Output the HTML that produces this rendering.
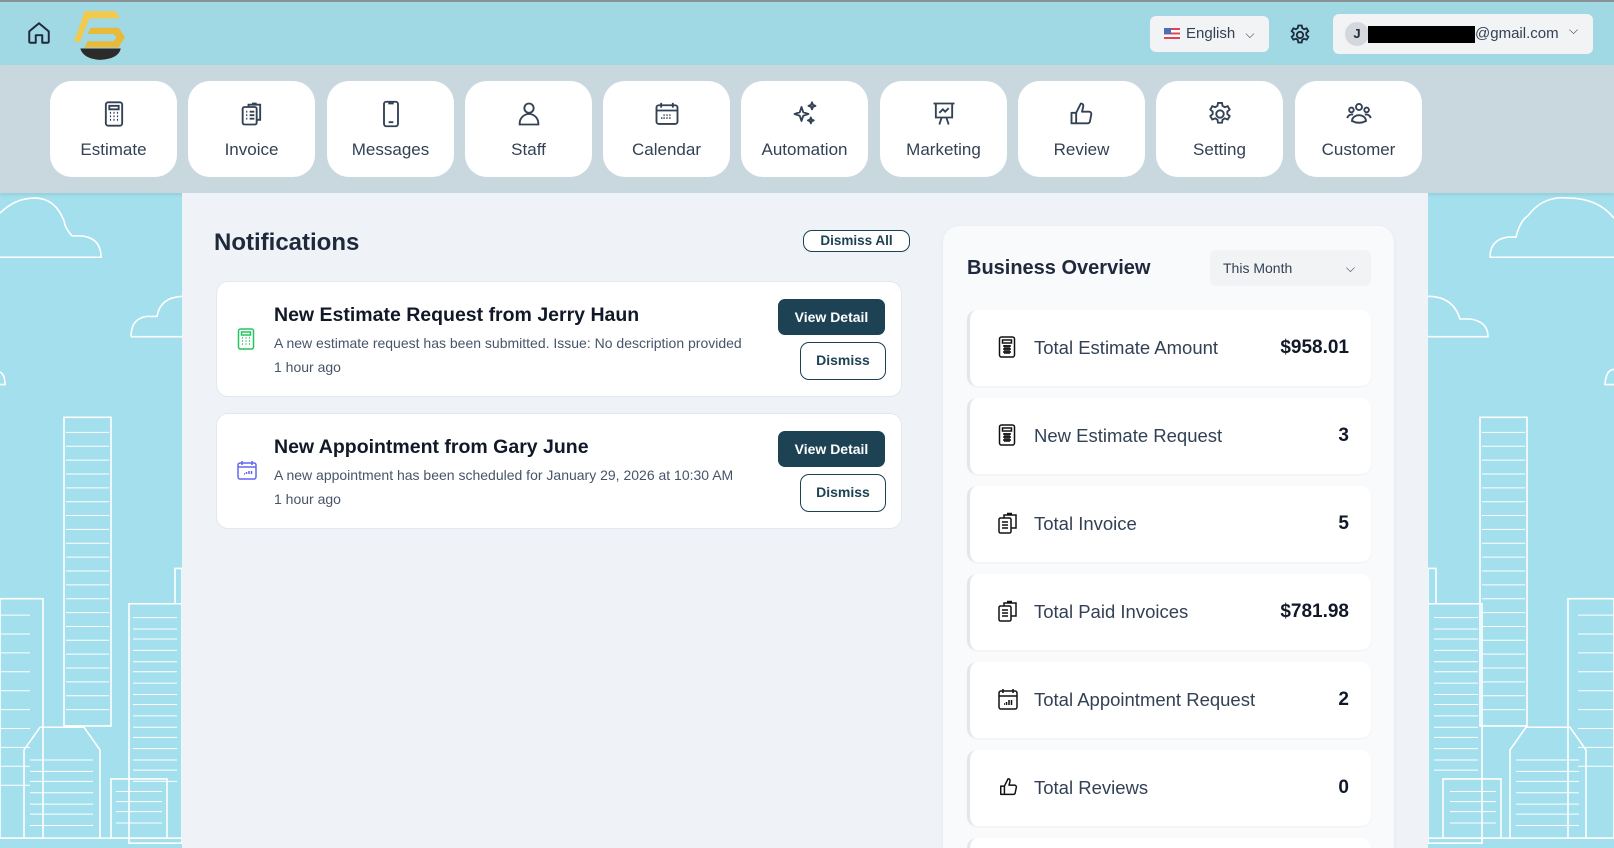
<!DOCTYPE html>
<html><head><meta charset="utf-8"><style>
*{box-sizing:border-box;margin:0;padding:0}
html{width:1614px;height:848px;overflow:hidden}
body{width:1614px;height:848px;overflow:hidden;font-family:"Liberation Sans",sans-serif;color:#1e293b;background:#a3dfec;position:relative}
.hdr{position:absolute;left:0;top:0;width:1614px;height:65px;background:#a0d8e3;border-top:2px solid #8a9296}
.nav{position:absolute;left:0;top:65px;width:1614px;height:128px;background:#c9d8df;box-shadow:0 2px 3px rgba(0,0,0,.08)}
.card{position:absolute;top:16px;width:127px;height:96px;background:#fff;border-radius:22px;text-align:center}
.card svg{position:absolute;left:50%;top:19px;margin-left:-14px}
.card span{position:absolute;left:0;right:0;top:59px;font-size:17px;color:#334155}
.main{position:absolute;left:182px;top:193px;width:1246px;height:655px;background:#eff3f7}
.ttl{position:absolute;font-weight:bold;color:#1e293b}
.btn-o{position:absolute;border:1.5px solid #1c4254;border-radius:9px;color:#1c4254;font-weight:bold;text-align:center;background:#fff}
.btn-d{position:absolute;background:#1c4254;color:#fff;border-radius:7px;font-weight:bold;text-align:center;font-size:14px}
.nc{position:absolute;left:216px;width:686px;height:116px;background:#fff;border-radius:12px;border:1px solid #e3e8ee}
.nc h3{position:absolute;left:57px;top:22px;font-size:19.5px;font-weight:bold;color:#111827}
.nc p{position:absolute;left:57px;font-size:14px;color:#475569}
.ov{position:absolute;left:943px;top:226px;width:451px;height:622px;background:#f8fafc;border-radius:16px 16px 0 0;box-shadow:0 1px 4px rgba(0,0,0,.05)}
.sc{position:absolute;left:967px;width:404px;height:76px;background:#fff;border-radius:10px;border-left:3px solid #e2e5e9;box-shadow:0 1px 2px rgba(0,0,0,.04)}
.sc svg{position:absolute;left:28px;top:26px}
.sc .l{position:absolute;left:64px;top:27px;font-size:18.5px;color:#334155}
.sc .v{position:absolute;right:22px;top:27px;font-size:19px;font-weight:bold;color:#111827}
.sk *{vector-effect:non-scaling-stroke}
</style></head><body>
<svg class="sk" style="position:absolute;left:0;top:193px" width="182" height="655" viewBox="0 0 182 655" fill="none" stroke="#fff" stroke-width="1.6"><g transform="scale(1,1.26)">
<path d="M0 51 H101 Q101 35 80 34 H72 Q65 28 64 22 Q55 4 35 4 Q15 4 0 16"/>
<path d="M131 114 Q131 100 146 98 H157 Q160 83 182 82"/><path d="M131 114 H182"/>
<path d="M0 152 H5 Q5 144 0 142"/>
<rect x="64" y="178" width="47" height="245"/>
<g stroke-width="1"><path d="M66 190H109M66 201H109M66 212H109M66 223H109M66 234H109M66 245H109M66 256H109M66 267H109M66 278H109M66 289H109M66 300H109M66 311H109M66 322H109M66 333H109M66 344H109M66 355H109M66 366H109M66 377H109M66 388H109M66 399H109M66 410H109"/></g>
<rect x="0" y="322" width="43" height="190"/><rect x="129" y="326" width="53" height="190"/><rect x="175" y="298" width="7" height="28"/>
<g stroke-width="1"><path d="M133 337H177M133 346H177M133 354H177M133 363H177M133 372H177M133 380H177M133 389H177M133 398H177M133 406H177M133 415H177M133 424H177M133 432H177M133 441H177M133 450H177M133 458H177M133 467H177M0 335H30M0 350H30M0 365H30M0 380H30M0 395H30M0 410H30M0 425H30M0 440H30M0 455H30M0 470H30"/></g>
<path d="M24 512 V442 L40 424 H84 L100 442 V512"/>
<g stroke-width="1"><path d="M30 450H93M30 459H93M30 467H93M30 476H93M30 485H93M30 493H93M30 502H93M116 475H162M116 483H162M116 491H162M116 500H162"/></g>
<rect x="111" y="465" width="56" height="47"/>
<path d="M0 512H182"/></g>
</svg>
<svg class="sk" style="position:absolute;left:1428px;top:193px" width="186" height="655" viewBox="0 0 186 655" fill="none" stroke="#fff" stroke-width="1.6"><g transform="scale(1,1.26)">
<path d="M62 51 Q62 37 80 35 H88 Q92 22 100 18 Q115 2 140 4 Q170 4 186 20"/><path d="M62 51 H186"/>
<path d="M0 82 Q25 82 32 100 H42 Q60 102 60 114 H0"/>
<path d="M186 140 Q178 140 177 152 H186"/>
<rect x="52" y="178" width="47" height="245"/>
<g stroke-width="1"><path d="M54 190H97M54 201H97M54 212H97M54 223H97M54 234H97M54 245H97M54 256H97M54 267H97M54 278H97M54 289H97M54 300H97M54 311H97M54 322H97M54 333H97M54 344H97M54 355H97M54 366H97M54 377H97M54 388H97M54 399H97M54 410H97"/></g>
<rect x="0" y="326" width="54" height="190"/><rect x="0" y="298" width="8" height="28"/><rect x="140" y="322" width="46" height="190"/>
<g stroke-width="1"><path d="M6 337H50M6 346H50M6 354H50M6 363H50M6 372H50M6 380H50M6 389H50M6 398H50M6 406H50M6 415H50M6 424H50M6 432H50M6 441H50M6 450H50M6 458H50M150 335H186M150 350H186M150 365H186M150 380H186M150 395H186M150 410H186M150 425H186M150 440H186M150 455H186"/></g>
<path d="M82 512 V442 L98 424 H142 L158 442 V512"/>
<g stroke-width="1"><path d="M88 450H151M88 459H151M88 467H151M88 476H151M88 485H151M88 493H151M88 502H151M22 475H68M22 483H68M22 491H68M22 500H68"/></g>
<rect x="15" y="465" width="58" height="47"/>
<path d="M0 512H186"/></g>
</svg>

<div class="hdr">
<svg style="position:absolute;left:26px;top:18px" width="26" height="26" viewBox="0 0 24 24" fill="none" stroke="#1e293b" stroke-width="1.8" stroke-linejoin="round"><path d="M3 10.5 12 3l9 7.5V20a1 1 0 0 1-1 1h-5v-7H9v7H4a1 1 0 0 1-1-1z"/></svg>
<svg style="position:absolute;left:72px;top:8px" width="56" height="50" viewBox="0 0 54 48"><path d="M12 1 H42 L46 8 H17 L10 24 L3 30 Z" fill="#f2c94c"/><path d="M2 30 L11 6 H16 L8 31Z" fill="#f2c94c"/><path d="M18 17 H45 L51 26 L45 36 H12 L15 30 H40 L43 26 L40 23 H15 Z" fill="#e9b93a"/><path d="M8 37 H47 Q45 47 27 48 Q11 47 8 37Z" fill="#2d2a2a"/></svg>
<div style="position:absolute;left:1150px;top:14px;width:119px;height:36px;background:#f1f3f5;border-radius:6px;font-size:15px;color:#334155;line-height:36px;padding-left:14px"><span style="display:inline-block;width:16px;height:11px;background:linear-gradient(#d45 0 20%,#fff 20% 40%,#d45 40% 60%,#fff 60% 80%,#d45 80%);position:relative;vertical-align:-1px;margin-right:6px"><i style="position:absolute;left:0;top:0;width:7px;height:6px;background:#4a6fb5"></i></span>English <span style="margin-left:6px;font-size:12px">⌵</span></div>
<svg style="position:absolute;left:1288px;top:21px" width="24" height="24" viewBox="0 0 24 24" fill="none" stroke="#1e293b" stroke-width="1.8"><path d="M10.3 2.5h3.4l.5 2.6 1.9 1.1 2.5-.9 1.7 2.9-2 1.7v2.2l2 1.7-1.7 2.9-2.5-.9-1.9 1.1-.5 2.6h-3.4l-.5-2.6-1.9-1.1-2.5.9-1.7-2.9 2-1.7v-2.2l-2-1.7 1.7-2.9 2.5.9 1.9-1.1z"/><circle cx="12" cy="12" r="3.2"/></svg>
<div style="position:absolute;left:1333px;top:12px;width:260px;height:40px;background:#f1f3f5;border-radius:6px">
<div style="position:absolute;left:12px;top:8px;width:24px;height:24px;border-radius:50%;background:#d4d7dc;font-size:13px;font-weight:bold;text-align:center;line-height:24px">J</div>
<div style="position:absolute;left:35px;top:12px;width:107px;height:17px;background:#000"></div>
<div style="position:absolute;left:142px;top:11px;font-size:15px;color:#334155">@gmail.com</div>
<div style="position:absolute;left:236px;top:9px;font-size:12px;color:#334155">⌵</div></div>
</div>

<div class="nav">
<div class="card" style="left:50px"><svg width="28" height="28" viewBox="0 0 24 24" fill="none" stroke="#334155" stroke-width="1.6"><rect x="5" y="2" width="14" height="20" rx="2"/><rect x="8" y="5" width="8" height="3"/><path d="M8.5 11h1M11.5 11h1M14.5 11h1M8.5 14h1M11.5 14h1M14.5 14h1M8.5 17h1M11.5 17h1M14.5 17h1"/></svg><span>Estimate</span></div>
<div class="card" style="left:188px"><svg width="28" height="28" viewBox="0 0 24 24" fill="none" stroke="#334155" stroke-width="1.6"><rect x="4" y="6" width="12" height="15" rx="1.5"/><path d="M9 6V4h10v13h-3M12 3h4"/><path d="M7 10h1M10 10h4M7 13h1M10 13h4M7 16h1M10 16h4"/></svg><span>Invoice</span></div>
<div class="card" style="left:327px"><svg width="28" height="28" viewBox="0 0 24 24" fill="none" stroke="#334155" stroke-width="1.6"><rect x="6" y="1.5" width="12" height="21" rx="2"/><path d="M10 19h4M10.5 2v1h3V2"/></svg><span>Messages</span></div>
<div class="card" style="left:465px"><svg width="28" height="28" viewBox="0 0 24 24" fill="none" stroke="#334155" stroke-width="1.6"><circle cx="12" cy="7" r="4"/><path d="M4 21v-1a8 8 0 0 1 16 0v1z"/></svg><span>Staff</span></div>
<div class="card" style="left:603px"><svg width="28" height="28" viewBox="0 0 24 24" fill="none" stroke="#334155" stroke-width="1.6"><rect x="3" y="4.5" width="18" height="16" rx="2"/><path d="M7 2.5v4M17 2.5v4M3 9h18M9 13h1M11.5 13h1M14 13h1M7 15.5h1M9 15.5h1M11.5 15.5h1M14 15.5h1"/></svg><span>Calendar</span></div>
<div class="card" style="left:741px"><svg width="28" height="28" viewBox="0 0 24 24" fill="none" stroke="#334155" stroke-width="1.6" stroke-linejoin="round"><path d="M9 6l1.5 4.5L15 12l-4.5 1.5L9 18l-1.5-4.5L3 12l4.5-1.5zM18 2l.8 2.2L21 5l-2.2.8L18 8l-.8-2.2L15 5l2.2-.8zM17 15l.7 1.8 1.8.7-1.8.7L17 20l-.7-1.8-1.8-.7 1.8-.7z"/></svg><span>Automation</span></div>
<div class="card" style="left:880px"><svg width="28" height="28" viewBox="0 0 24 24" fill="none" stroke="#334155" stroke-width="1.6"><path d="M3 3h18M5 3v12h14V3M8 21l2-6M16 21l-2-6M8 11l3-3 2 2 3-3"/></svg><span>Marketing</span></div>
<div class="card" style="left:1018px"><svg width="28" height="28" viewBox="0 0 24 24" fill="none" stroke="#334155" stroke-width="1.6" stroke-linejoin="round"><path d="M7 11l4-8c1.5 0 2.5 1 2 3l-1 4h6a2 2 0 0 1 2 2.3l-1.2 6A2 2 0 0 1 16.8 20H7zM3 11h4v9H3z"/></svg><span>Review</span></div>
<div class="card" style="left:1156px"><svg width="28" height="28" viewBox="0 0 24 24" fill="none" stroke="#334155" stroke-width="1.6"><path d="M10.3 2.5h3.4l.5 2.6 1.9 1.1 2.5-.9 1.7 2.9-2 1.7v2.2l2 1.7-1.7 2.9-2.5-.9-1.9 1.1-.5 2.6h-3.4l-.5-2.6-1.9-1.1-2.5.9-1.7-2.9 2-1.7v-2.2l-2-1.7 1.7-2.9 2.5.9 1.9-1.1z"/><circle cx="12" cy="12" r="3.2"/></svg><span>Setting</span></div>
<div class="card" style="left:1295px"><svg width="28" height="28" viewBox="0 0 24 24" fill="none" stroke="#334155" stroke-width="1.6"><circle cx="12" cy="6" r="2.6"/><circle cx="5.5" cy="8.5" r="2"/><circle cx="18.5" cy="8.5" r="2"/><path d="M6 18a6 5 0 0 1 12 0q-6 3-12 0zM2 15.5a4 3.5 0 0 1 5-3M22 15.5a4 3.5 0 0 0-5-3"/></svg><span>Customer</span></div>
</div>

<div class="main"></div>
<div class="ttl" style="left:214px;top:229px;font-size:24px">Notifications</div>
<div class="btn-o" style="left:803px;top:230px;width:107px;height:22px;font-size:13.5px;line-height:19px">Dismiss All</div>

<div class="nc" style="top:281px">
<svg style="position:absolute;left:20px;top:46px" width="18" height="22" viewBox="0 0 18 22" fill="none" stroke="#22c55e" stroke-width="1.5"><rect x="1.5" y="1" width="15" height="20" rx="2"/><rect x="4.5" y="4" width="9" height="3"/><path d="M5 10h1M8.5 10h1M12 10h1M5 13h1M8.5 13h1M12 13h1M5 16h1M8.5 16h1M12 16h1"/></svg>
<h3>New Estimate Request from Jerry Haun</h3>
<p style="top:53px">A new estimate request has been submitted. Issue: No description provided</p>
<p style="top:77px">1 hour ago</p>
<div class="btn-d" style="left:561px;top:17px;width:107px;height:36px;line-height:36px">View Detail</div>
<div class="btn-o" style="left:583px;top:60px;width:86px;height:38px;line-height:35px;font-size:14px">Dismiss</div>
</div>
<div class="nc" style="top:413px">
<svg style="position:absolute;left:20px;top:46px" width="20" height="20" viewBox="0 0 20 20" fill="none" stroke="#6366f1" stroke-width="1.5"><rect x="1" y="3" width="18" height="16" rx="2"/><path d="M5 1v4M15 1v4M1 7h18M7 14h1M9.5 12v2M12 11v3M14.5 11v3"/></svg>
<h3>New Appointment from Gary June</h3>
<p style="top:53px">A new appointment has been scheduled for January 29, 2026 at 10:30 AM</p>
<p style="top:77px">1 hour ago</p>
<div class="btn-d" style="left:561px;top:17px;width:107px;height:36px;line-height:36px">View Detail</div>
<div class="btn-o" style="left:583px;top:60px;width:86px;height:38px;line-height:35px;font-size:14px">Dismiss</div>
</div>

<div class="ov"></div>
<div class="ttl" style="left:967px;top:257px;font-size:20px">Business Overview</div>
<div style="position:absolute;left:1210px;top:250px;width:161px;height:36px;background:#f1f3f5;border-radius:6px;font-size:14px;color:#334155;line-height:36px;padding-left:13px">This Month<span style="position:absolute;right:16px;font-size:12px">⌵</span></div>

<div class="sc" style="top:310px"><svg width="18" height="22" viewBox="0 0 18 22" fill="none" stroke="#111" stroke-width="1.5"><rect x="1.5" y="1" width="15" height="20" rx="2"/><rect x="4.5" y="4" width="9" height="3"/><path d="M5 10h8M5 13h8M5 16h8M7 9v9M9 9v9M11 9v9"/></svg><span class="l">Total Estimate Amount</span><span class="v">$958.01</span></div>
<div class="sc" style="top:398px"><svg width="18" height="22" viewBox="0 0 18 22" fill="none" stroke="#111" stroke-width="1.5"><rect x="1.5" y="1" width="15" height="20" rx="2"/><rect x="4.5" y="4" width="9" height="3"/><path d="M5 10h8M5 13h8M5 16h8M7 9v9M9 9v9M11 9v9"/></svg><span class="l">New Estimate Request</span><span class="v">3</span></div>
<div class="sc" style="top:486px"><svg width="20" height="22" viewBox="0 0 20 22" fill="none" stroke="#111" stroke-width="1.5"><rect x="1" y="6" width="12" height="15" rx="1.5"/><path d="M6 6V3h12v13h-5M9 1.5h5M4 10h6M4 13h6M4 16h6"/></svg><span class="l">Total Invoice</span><span class="v">5</span></div>
<div class="sc" style="top:574px"><svg width="20" height="22" viewBox="0 0 20 22" fill="none" stroke="#111" stroke-width="1.5"><rect x="1" y="6" width="12" height="15" rx="1.5"/><path d="M6 6V3h12v13h-5M9 1.5h5M4 10h6M4 13h6M4 16h6"/></svg><span class="l">Total Paid Invoices</span><span class="v">$781.98</span></div>
<div class="sc" style="top:662px"><svg width="20" height="22" viewBox="0 0 20 22" fill="none" stroke="#111" stroke-width="1.5"><rect x="1" y="3" width="18" height="18" rx="2"/><path d="M5 1v4M15 1v4M1 8h18M6 16h1M8.5 14v3M11 12v5M13.5 12v5"/></svg><span class="l">Total Appointment Request</span><span class="v">2</span></div>
<div class="sc" style="top:750px"><svg width="22" height="22" viewBox="0 0 24 24" fill="none" stroke="#111" stroke-width="1.6" stroke-linejoin="round"><path d="M7 11l4-8c1.5 0 2.5 1 2 3l-1 4h6a2 2 0 0 1 2 2.3l-1.2 6A2 2 0 0 1 16.8 20H7zM3 11h4v9H3z"/></svg><span class="l">Total Reviews</span><span class="v">0</span></div>
<div class="sc" style="top:838px;height:10px;border-radius:10px 10px 0 0"></div>
</body></html>
